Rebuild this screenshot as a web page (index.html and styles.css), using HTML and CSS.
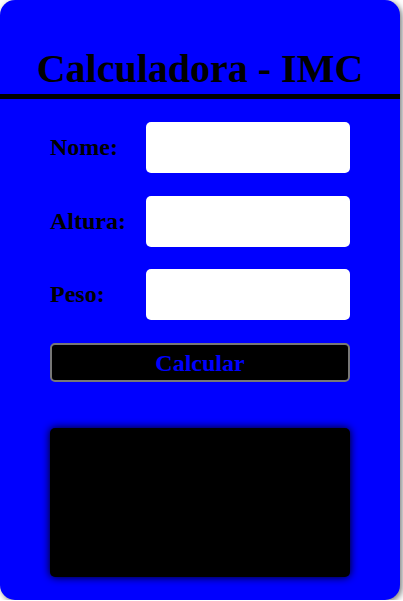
FILE: index.html
```html
<!DOCTYPE html>
<html lang="pt-BR">
<head>
    <meta charset="UTF-8">
    <title>Calculadora - IMC</title>
    <link rel="stylesheet" href="styles.css">
</head>
<body>
    <div class="card">
        <h1 class="titulo">Calculadora - IMC</h1>

        <form class="form">
            <div class="linha">
                <label for="nome">Nome:</label>
                <input type="text" id="nome">
            </div>
            <div class="linha">
                <label for="altura">Altura:</label>
                <input type="text" id="altura">
            </div>
            <div class="linha">
                <label for="peso">Peso:</label>
                <input type="text" id="peso">
            </div>
            <button type="button" class="btn">Calcular</button>
        </form>

        <div class="resultado"></div>
    </div>
</body>
</html>
```

FILE: styles.css
```css
body {
    margin: 0;
    font-family: "Liberation Serif", "Times New Roman", serif;
    background: #fff;
}
.card {
    width: 400px;
    height: 600px;
    background: #0000ff;
    border-radius: 15px;
    box-shadow: 2px 2px 6px #777;
    overflow: hidden;
}
.titulo {
    margin: 0;
    padding: 45px 0 2px;
    text-align: center;
    font-size: 40px;
    color: #000;
    border-bottom: 5px solid #000;
}
.form {
    display: flex;
    flex-direction: column;
    gap: 22.5px;
    padding: 23px 50px 0;
}
.linha {
    display: flex;
    align-items: center;
}
.linha label {
    width: 96px;
    font-size: 24px;
    font-weight: bold;
    color: #000;
}
.linha input {
    width: 204px;
    height: 51px;
    box-sizing: border-box;
    border: none;
    border-radius: 5px;
    background: #fff;
}
.btn {
    height: 39px;
    margin-top: 0.5px;
    background: #000;
    color: #0000ff;
    border: 2px solid #777;
    border-radius: 5px;
    font-family: inherit;
    font-size: 24px;
    font-weight: bold;
    line-height: 1;
}
.resultado {
    margin: 46px 50px 0;
    height: 149px;
    background: #000;
    border-radius: 5px;
    box-shadow: 0 0 8px #000;
}
```
